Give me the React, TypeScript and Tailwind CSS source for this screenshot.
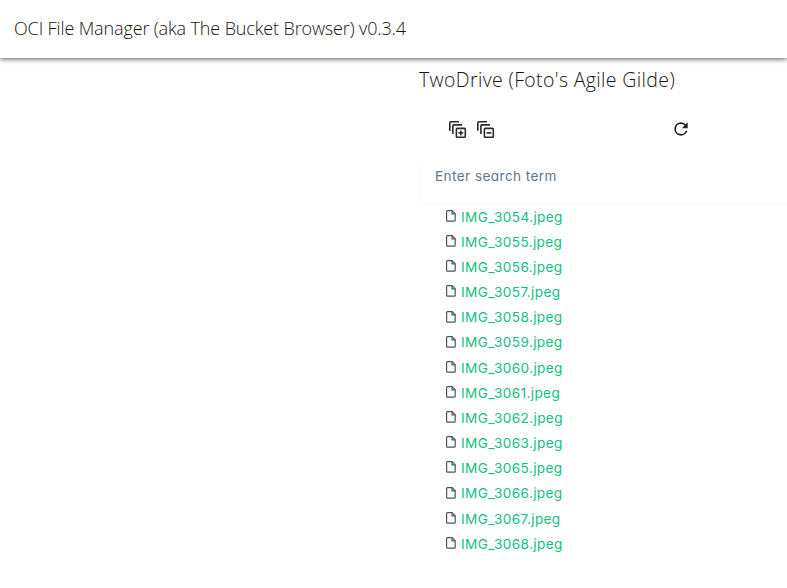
const files = [3054, 3055, 3056, 3057, 3058, 3059, 3060, 3061, 3062, 3063, 3065, 3066, 3067, 3068];

function StackIcon({ plus }: { plus?: boolean }) {
  return (
    <svg width="18" height="18" viewBox="0 0 18 18" fill="none" stroke="#2b2b2b" strokeWidth="1.6">
      <path d="M.8 9.8V1.8q0-1 1-1H10" />
      <path d="M3.9 13V4.9q0-1 1-1h8.2" />
      <rect x="7.4" y="7.4" width="8.9" height="8.9" rx=".8" />
      <path d="M9.4 11.9h5" />
      {plus && <path d="M11.9 9.4v5" />}
    </svg>
  );
}

function RefreshIcon() {
  return (
    <svg width="20" height="20" viewBox="0 0 24 24" fill="#1f1f1f">
      <path d="M17.65 6.35A7.96 7.96 0 0 0 12 4a8 8 0 1 0 7.73 10h-2.08A6 6 0 1 1 12 6c1.66 0 3.14.69 4.22 1.78L13 11h7V4z" />
    </svg>
  );
}

function FileIcon() {
  return (
    <svg className="-mt-[2px]" width="10" height="12" viewBox="0 0 10 12" fill="none" stroke="#475569" strokeWidth="1.2" strokeLinejoin="round">
      <path d="M1.5.7h4.7l3 3v6.6q0 .9-.9.9H1.5q-.9 0-.9-.9V1.6q0-.9.9-.9z" />
      <path d="M6 .8v3.1h3.1" />
    </svg>
  );
}

export default function App() {
  return (
    <div className="h-[588px] w-full overflow-hidden bg-white font-['Open_Sans','Noto_Sans',sans-serif] font-light text-[#161513]">
      <header className="relative flex h-[58px] items-center bg-white pb-[2px] pl-[14px] shadow-[0_1px_5px_rgba(0,0,0,0.65)]">
        <h1 className="whitespace-nowrap text-[18px] leading-6 tracking-[-0.13px]">
          OCI File Manager (aka The Bucket Browser) v0.3.4
        </h1>
      </header>
      <main className="ml-[419px]">
        <h2 className="pt-[10px] text-[19.5px] leading-6 tracking-[0.36px] whitespace-nowrap">TwoDrive (Foto's Agile Gilde)</h2>
        <div className="mt-[29px] flex h-5 items-start pl-[30px]">
          <StackIcon plus />
          <div className="ml-[9.5px]">
            <StackIcon />
          </div>
          <div className="-mt-[2px] ml-[176.5px]">
            <RefreshIcon />
          </div>
        </div>
        <div className="mt-[22px] h-[41px] border-b border-l border-[#f8f8f9] pt-[3px] pl-[15px] font-['Inter',sans-serif] text-[13.6px] leading-5 font-normal tracking-[0.42px] text-[#64748b] [font-feature-settings:'cv11']">
          Enter search term
        </div>
        <ul className="pt-[0.3px] pl-[27px] font-['Inter',sans-serif] text-[13.6px] font-normal tracking-[0.36px] text-[#0fc086] [font-feature-settings:'cv11']">
          {files.map((n) => (
            <li key={n} className="flex h-[25.17px] items-center whitespace-nowrap">
              <FileIcon />
              <span className="ml-[5px]">IMG_{n}.jpeg</span>
            </li>
          ))}
        </ul>
      </main>
    </div>
  );
}
